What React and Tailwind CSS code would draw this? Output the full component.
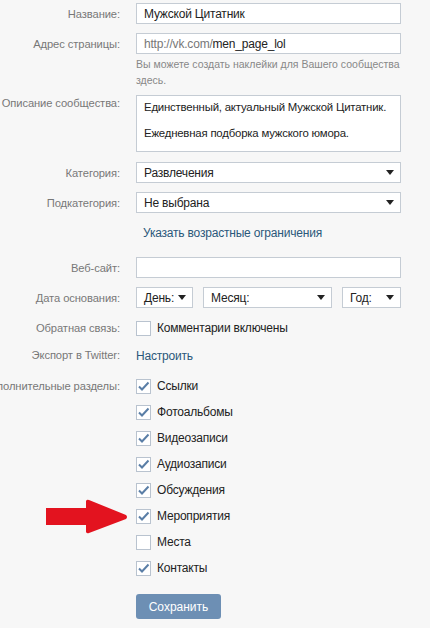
import React from 'react';

const font = { fontFamily: '"Liberation Sans", Arial, sans-serif' };

const Arrow = () => (
  <svg width="8" height="5" viewBox="0 0 8 5" className="shrink-0">
    <path d="M0 0 H8 L4 5 Z" fill="#222" />
  </svg>
);

const Check = ({ checked }) => (
  <div className="w-[15px] h-[15px] border border-[#b9c3cf] bg-white shrink-0 relative">
    {checked && (
      <svg width="15" height="15" viewBox="0 0 15 15" className="absolute -top-px -left-px">
        <path d="M3 7.5 L6 10.5 L12.5 3.5" fill="none" stroke="#5a7ea6" strokeWidth="2" />
      </svg>
    )}
  </div>
);

const Row = ({ label, children, className = '' }) => (
  <div className={`flex items-center ${className}`}>
    <div className="w-[120px] shrink-0 flex justify-end">
      <span className="whitespace-nowrap text-[#777] text-[11.2px] leading-[16px] tracking-[-0.1px]">{label}</span>
    </div>
    <div className="ml-[16px] w-[265px]">{children}</div>
  </div>
);

const Field = ({ children, className = '' }) => (
  <div className={`h-[21px] bg-white border border-[#c5ccd4] flex items-center px-[7px] text-[12px] tracking-[-0.2px] text-[#222] whitespace-nowrap ${className}`}>
    {children}
  </div>
);

const Select = ({ value, className = '' }) => (
  <Field className={`justify-between pr-[6px] ${className}`}>
    <span>{value}</span>
    <Arrow />
  </Field>
);

const sections = [
  ['Ссылки', true],
  ['Фотоальбомы', true],
  ['Видеозаписи', true],
  ['Аудиозаписи', true],
  ['Обсуждения', true],
  ['Мероприятия', true],
  ['Места', false],
  ['Контакты', true],
];

export default function App() {
  return (
    <div className="w-[430px] h-[628px] bg-[#f7f7f7] overflow-hidden relative pt-[3px]" style={font}>
      <Row label="Название:">
        <Field>Мужской Цитатник</Field>
      </Row>

      <Row label="Адрес страницы:" className="mt-[9px]">
        <Field>
          <span className="text-[#777]">http://vk.com/</span>
          <span>men_page_lol</span>
        </Field>
      </Row>
      <div className="ml-[136px] w-[265px] mt-[2px] text-[10.5px] leading-[16px] text-[#888] whitespace-nowrap">
        Вы можете создать наклейки для Вашего сообщества
        <br />
        здесь.
      </div>

      <Row label="Описание сообщества:" className="mt-[7px] !items-start">
        <div className="h-[57px] bg-white border border-[#c5ccd4] px-[7px] pt-[3px] text-[11.4px] tracking-[-0.2px] leading-[16px] text-[#222] whitespace-nowrap">
          <p>Единственный, актуальный Мужской Цитатник.</p>
          <p className="mt-[10px]">Ежедневная подборка мужского юмора.</p>
        </div>
      </Row>

      <Row label="Категория:" className="mt-[10px]">
        <Select value="Развлечения" />
      </Row>
      <Row label="Подкатегория:" className="mt-[9px]">
        <Select value="Не выбрана" />
      </Row>

      <div className="ml-[143px] mt-[12px] h-[16px] leading-[16px] text-[12px] tracking-[-0.2px] text-[#2b587a]">
        Указать возрастные ограничения
      </div>

      <Row label="Веб-сайт:" className="mt-[16px]">
        <Field />
      </Row>

      <Row label="Дата основания:" className="mt-[9px]">
        <div className="flex gap-[10px]">
          <Select value="День:" className="w-[57px]" />
          <Select value="Месяц:" className="w-[129px]" />
          <Select value="Год:" className="w-[59px]" />
        </div>
      </Row>

      <Row label="Обратная связь:" className="mt-[10px] h-[20px]">
        <div className="flex items-center gap-[6px] text-[12px] tracking-[-0.2px] text-[#222]">
          <Check checked={false} />
          <span>Комментарии включены</span>
        </div>
      </Row>

      <Row label="Экспорт в Twitter:" className="mt-[7px] h-[20px]">
        <span className="text-[12px] tracking-[-0.2px] text-[#2b587a]">Настроить</span>
      </Row>

      <Row label="Дополнительные разделы:" className="mt-[13px] !items-start">
        <div className="flex flex-col -mt-[5px]">
          {sections.map(([name, on]) => (
            <div key={name} className="h-[26px] flex items-center gap-[6px] text-[12px] tracking-[-0.2px] text-[#222]">
              <Check checked={on} />
              <span>{name}</span>
            </div>
          ))}
        </div>
      </Row>

      <div className="ml-[136px] mt-[13px] w-[85px] h-[25px] rounded-[3px] bg-[#6d8fb4] text-white text-[12px] flex items-center justify-center">
        Сохранить
      </div>

      <svg className="absolute left-[44px] top-[499px]" width="85" height="36" viewBox="0 0 85 36">
        <path d="M2 9 H42 V2 Q43 0 45 1 L82 16 Q84 18 82 20 L45 34 Q43 35 42 33 V26 H2 Z" fill="#e3131f" />
      </svg>
    </div>
  );
}
